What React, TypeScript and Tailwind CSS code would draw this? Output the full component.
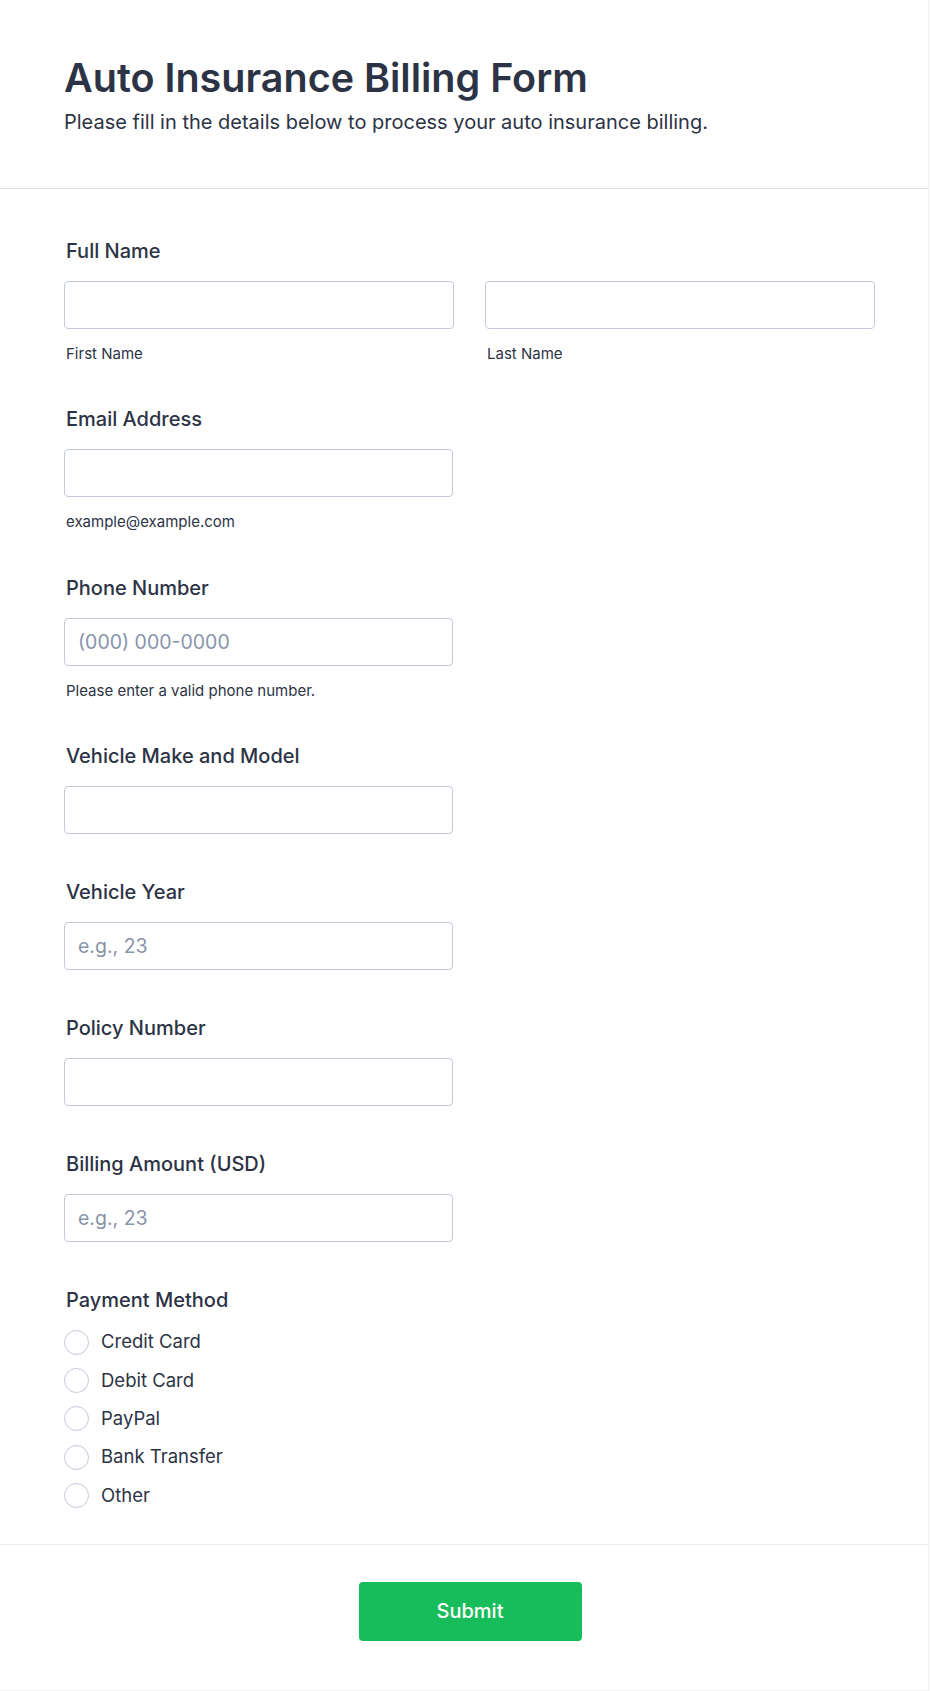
import { FC } from "react";

const font = { fontFamily: "Inter, 'Noto Sans', sans-serif" };

const Label: FC<{ text: string }> = ({ text }) => (
    <div className="text-[20px] leading-[28px] font-medium text-[#2c3345] pl-[2px] mb-[16px]">{text}</div>
);

const Input: FC<{ placeholder?: string; wide?: boolean }> = ({ placeholder, wide }) => (
    <input
        type="text"
        placeholder={placeholder}
        className={
            (wide ? "w-full " : "w-[389px] ") +
            "h-[48px] rounded-[4px] border border-[#c3cad8] bg-white px-[13px] text-[19.5px] text-[#2c3345] placeholder:text-[#8894ab] outline-none block"
        }
    />
);

const Sub: FC<{ text: string }> = ({ text }) => (
    <div className="mt-[15px] mb-[-2.75px] text-[15px] leading-[20px] text-[#2c3345] pl-[2px]">{text}</div>
);

const methods = ["Credit Card", "Debit Card", "PayPal", "Bank Transfer", "Other"];

export default function App() {
    return (
        <div style={font} className="w-[929px] min-h-[1691px] bg-white border-r border-b border-[#f2f3f8]">
            <div className="px-[64px] pt-[54px] pb-[52px] border-b border-[#dcdde8]">
                <h1 className="text-[39.5px] leading-[48px] font-semibold text-[#2c3345]">Auto Insurance Billing Form</h1>
                <p className="mt-[6px] text-[20px] leading-[28px] text-[#2c3345]">Please fill in the details below to process your auto insurance billing.</p>
            </div>

            <div className="px-[64px] pt-[48px] pb-[36px] flex flex-col gap-[44px]">
                <div>
                    <Label text="Full Name" />
                    <div className="flex gap-[31px] w-[811px]">
                        <div className="flex-1">
                            <Input wide />
                            <Sub text="First Name" />
                        </div>
                        <div className="flex-1">
                            <Input wide />
                            <Sub text="Last Name" />
                        </div>
                    </div>
                </div>

                <div>
                    <Label text="Email Address" />
                    <Input />
                    <Sub text="example@example.com" />
                </div>

                <div>
                    <Label text="Phone Number" />
                    <Input placeholder="(000) 000-0000" />
                    <Sub text="Please enter a valid phone number." />
                </div>

                <div>
                    <Label text="Vehicle Make and Model" />
                    <Input />
                </div>

                <div>
                    <Label text="Vehicle Year" />
                    <Input placeholder="e.g., 23" />
                </div>

                <div>
                    <Label text="Policy Number" />
                    <Input />
                </div>

                <div>
                    <Label text="Billing Amount (USD)" />
                    <Input placeholder="e.g., 23" />
                </div>

                <div>
                    <Label text="Payment Method" />
                    <div className="flex flex-col gap-[13.3px]">
                        {methods.map((m) => (
                            <label key={m} className="flex items-center gap-[12px] h-[25px] cursor-pointer">
                                <span className="w-[25px] h-[25px] rounded-full border border-[#c3cad8] bg-white shrink-0" />
                                <span className="text-[18.5px] text-[#2c3345]">{m}</span>
                            </label>
                        ))}
                    </div>
                </div>
            </div>

            <div className="border-t border-[#e8e9f2] pt-[37px] pl-[12px] flex justify-center">
                <button className="w-[223px] h-[59px] rounded-[4px] bg-[#18bd5b] text-white text-[20px] font-medium">Submit</button>
            </div>
        </div>
    );
}
